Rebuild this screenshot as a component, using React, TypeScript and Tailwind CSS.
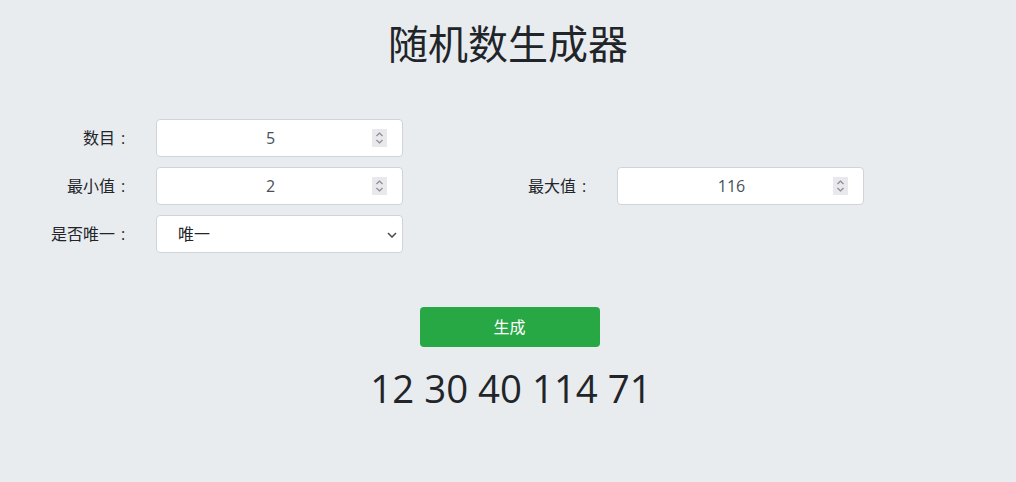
import React from "react";

const FONT = { fontFamily: '"Open Sans", "Noto Sans CJK SC", sans-serif' };

function Spinner() {
  return (
    <div className="absolute right-[15px] top-[9px] w-[15px] h-[18px] bg-[#e9e9ed] flex items-center justify-center">
      <svg width="9" height="14" viewBox="0 0 9 14" fill="none" stroke="#8a8a8f" strokeWidth="1.2">
        <path d="M1.5 5 L4.5 2 L7.5 5" />
        <path d="M1.5 9 L4.5 12 L7.5 9" />
      </svg>
    </div>
  );
}

function NumInput({ value }: { value: string }) {
  return (
    <div className="relative h-[38px] w-[247px] bg-white border border-[#ced4da] rounded-[4px] flex items-center justify-center pr-[18px] text-[16px] text-[#495057]">
      <span>{value}</span>
      <Spinner />
    </div>
  );
}

function Label({ text }: { text: string }) {
  return (
    <div className="h-[38px] flex items-center justify-end pr-[25px] text-[16px] text-[#212529]">
      <span>{text}</span>
      <span className="inline-block w-[16px] text-center">:</span>
    </div>
  );
}

export default function App() {
  return (
    <div className="min-h-screen bg-[#e9ecef]" style={FONT}>
      <h1 className="pt-[20px] text-center text-[40px] leading-[48px] text-[#212529] font-normal">
        随机数生成器
      </h1>
      <div className="mt-[51px] grid grid-cols-[156px_247px_214px_247px] gap-y-[10px]">
        <Label text="数目" />
        <NumInput value="5" />
        <div />
        <div />

        <Label text="最小值" />
        <NumInput value="2" />
        <Label text="最大值" />
        <NumInput value="116" />

        <Label text="是否唯一" />
        <div className="relative h-[38px] w-[247px] bg-white border border-[#ced4da] rounded-[4px] flex items-center pl-[21px] text-[16px] text-[#212529]">
          <span>唯一</span>
          <svg className="absolute right-[5px] top-[16px]" width="10" height="6" viewBox="0 0 10 6" fill="none" stroke="#505055" strokeWidth="1.6">
            <path d="M1 1 L5 5 L9 1" />
          </svg>
        </div>
        <div />
        <div />
      </div>
      <div className="mt-[54px] flex justify-center pl-[3px]">
        <button className="w-[180px] h-[40px] bg-[#28a745] rounded-[4px] text-white text-[16px]">
          生成
        </button>
      </div>
      <div className="mt-[18px] text-center text-[38.4px] leading-[46px] text-[#212529] pl-[6px]">
        12 30 40 114 71
      </div>
    </div>
  );
}
